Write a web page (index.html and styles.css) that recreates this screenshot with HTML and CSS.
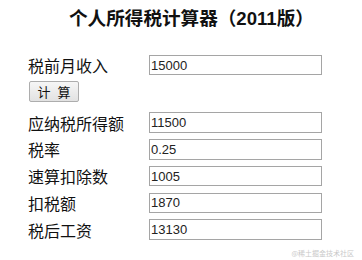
FILE: index.html
```html
<!DOCTYPE html>
<html lang="zh">
<head>
<meta charset="utf-8">
<link rel="stylesheet" href="styles.css">
</head>
<body>
<div class="page">
  <h1 class="title">个人所得税计算器（2011版）</h1>
  <div class="form">
    <div class="row"><span class="label">税前月收入</span><input class="field" type="text" value="15000"></div>
    <div class="btn-row"><button class="btn">计 算</button></div>
    <div class="row"><span class="label">应纳税所得额</span><input class="field" type="text" value="11500"></div>
    <div class="row"><span class="label">税率</span><input class="field" type="text" value="0.25"></div>
    <div class="row"><span class="label">速算扣除数</span><input class="field" type="text" value="1005"></div>
    <div class="row"><span class="label">扣税额</span><input class="field" type="text" value="1870"></div>
    <div class="row"><span class="label">税后工资</span><input class="field" type="text" value="13130"></div>
  </div>
  <div class="watermark">@稀土掘金技术社区</div>
</div>
</body>
</html>
```
FILE: styles.css
```css
html, body {
  margin: 0;
  padding: 0;
  background: #ffffff;
}
.page {
  position: relative;
  width: 362px;
  height: 260px;
  font-family: "Noto Sans CJK SC", "Liberation Sans", sans-serif;
  color: #111;
}
.title {
  margin: 0;
  padding: 7px 0 0 69px;
  font-size: 18.6px;
  line-height: 24px;
  font-weight: bold;
  color: #111;
  white-space: nowrap;
  font-family: "Liberation Sans", "Noto Sans CJK SC", sans-serif;
}
.form {
  display: flex;
  flex-direction: column;
  padding: 24px 0 0 28px;
}
.row {
  display: flex;
  align-items: center;
  height: 20px;
  margin-bottom: 6.75px;
}
.label {
  width: 121px;
  font-size: 16px;
  line-height: 20px;
  color: #111;
  white-space: nowrap;
}
.field {
  box-sizing: border-box;
  width: 173px;
  height: 20.5px;
  margin: 0;
  border: 1px solid #a5a5a5;
  padding: 0 2px 0 1px;
  font-family: "Liberation Sans", Arial, sans-serif;
  font-size: 13px;
  color: #222;
  background: #fff;
  outline: none;
}
.btn-row {
  display: flex;
  margin: -0.75px 0 10.5px 1px;
}
.btn {
  box-sizing: border-box;
  width: 50px;
  height: 21px;
  margin: 0;
  padding: 0 0 0 2px;
  border: 1px solid #adadad;
  border-radius: 2px;
  background: linear-gradient(#f6f6f6, #e2e2e2);
  font-family: "Noto Sans CJK SC", sans-serif;
  font-size: 13px;
  line-height: 19px;
  color: #111;
  letter-spacing: 2px;
}
.watermark {
  position: absolute;
  right: 8px;
  bottom: 3px;
  font-size: 7px;
  line-height: 8px;
  color: #c9c9c9;
  font-family: "Noto Sans CJK SC", sans-serif;
  white-space: nowrap;
}
```
